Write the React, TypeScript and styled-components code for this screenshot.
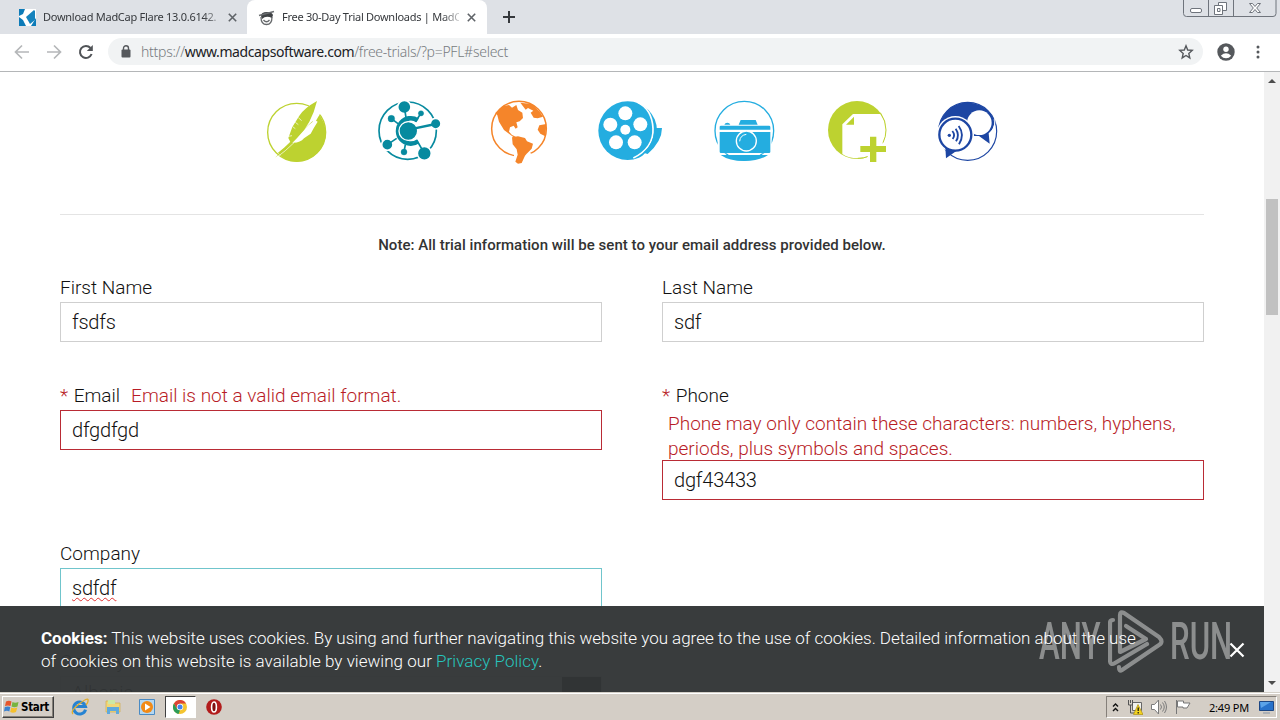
import React from "react";
import styled, { createGlobalStyle } from "styled-components";

const GlobalStyle = createGlobalStyle`
  * {
    box-sizing: border-box;
  }
  body {
    margin: 0;
    overflow: hidden;
    background: #fff;
    font-family: Roboto, sans-serif;
  }
  svg {
    display: block;
    flex: none;
  }
`;

const trialProducts = [
  { name: "Flare", viewBox: "36 18 210 210", Icon: FeatherIcon },
  { name: "Central", viewBox: "372 18 210 210", Icon: NetworkIcon },
  { name: "Lingo", viewBox: "0 0 210 210", Icon: GlobeIcon },
  { name: "Mimic", viewBox: "54 18 210 210", Icon: ReelIcon },
  { name: "Capture", viewBox: "390 18 210 210", Icon: CameraIcon },
  { name: "Contributor", viewBox: "36 18 210 210", Icon: PageIcon },
  { name: "Speech", viewBox: "372 18 210 210", Icon: SpeechIcon },
];

const App: React.FC = () => {
  return (
    <Screen>
      <GlobalStyle />
      <BrowserTabs />
      <AddressBar />
      <Viewport>
        <Page>
          <Products>
            {trialProducts.map(({ name, viewBox, Icon }) => (
              <svg key={name} width="70" height="70" viewBox={viewBox}>
                <Icon />
              </svg>
            ))}
          </Products>
          <Note>
            <NoteText>Note: All trial information will be sent to your email address provided below.</NoteText>
          </Note>
          <Form>
            <Field label="First Name" value="fsdfs" />
            <Field label="Last Name" value="sdf" />
            <Field label="Email" value="dfgdfgd" required error="Email is not a valid email format." />
            <Field
              label="Phone"
              value="dgf43433"
              required
              block
              error="Phone may only contain these characters: numbers, hyphens, periods, plus symbols and spaces."
            />
            <Field label="Company" value="sdfdf" focused />
            <span />
            <FieldBox>
              <Label>Country</Label>
              <Select>
                Albania
                <SelectButton />
              </Select>
            </FieldBox>
          </Form>
          <CookieBanner>
            <CookieText>
              <CookieLine $spacing={-0.02}>
                <b>Cookies:</b> This website uses cookies. By using and further navigating this website you agree to the
                use of cookies. Detailed information about the use
              </CookieLine>
              <CookieLine $spacing={0.03}>
                of cookies on this website is available by viewing our <a>Privacy Policy</a>.
              </CookieLine>
            </CookieText>
          </CookieBanner>
          <Watermark>
            <WatermarkWord>ANY</WatermarkWord>
            <svg width="56" height="64" viewBox="0 0 56 64" fill="none" stroke="#fff" strokeWidth="4.2" strokeLinejoin="round" strokeLinecap="round">
              <path d="M5 10 Q2 10 2 13 V50 Q2 56 7 53 L39 34 M12 21 V5 Q12 1 16 3 L51 27 Q56 32 51 35 L14 60 Q11 62 11 57" />
              <path d="M12 21 V42 L38 29 L18 16" />
            </svg>
            <WatermarkWord>RUN</WatermarkWord>
          </Watermark>
          <CloseBanner>
            <svg width="16" height="16" viewBox="0 0 16 16" stroke="#fff" strokeWidth="2.2">
              <path d="M1.5 1.5 14.5 14.5M14.5 1.5 1.5 14.5" />
            </svg>
          </CloseBanner>
        </Page>
        <Scrollbar>
          <ScrollArrow />
          <ScrollThumb />
          <ScrollArrow $down />
        </Scrollbar>
      </Viewport>
      <Taskbar />
    </Screen>
  );
};

export default App;

function BrowserTabs() {
  return (
    <TabStrip>
      <Tab $width={247}>
        <svg width="17" height="17" viewBox="0 0 17 17">
          <path d="M0 0h17v17H0z" fill="#fff" />
          <path d="M0 0h6L4 5 0 7zM0 8l4 3 3 6H0zM17 9v8h-5z" fill="#0d7bb8" />
          <path d="M7 8 15 1l1 1v9l-5 4z" fill="#1683bd" />
        </svg>
        <TabTitle>Download MadCap Flare 13.0.6142.</TabTitle>
        <CloseIcon />
      </Tab>
      <Tab $width={240} $active>
        <svg width="17" height="17" viewBox="0 0 17 17">
          <path d="M3 7Q3 3 9 3q5 0 6 3l-1 3Q8 6 4 10z" fill="#3f4245" />
          <path d="M1 6.500 16 2.500" stroke="#6a6d70" strokeWidth="1.500" />
          <path d="M3 8Q3 15.500 8.500 15.500T14 8M5.500 11q3 3.500 6 0" fill="none" stroke="#66696c" strokeWidth="1.300" />
        </svg>
        <TabTitle>Free 30-Day Trial Downloads | MadC</TabTitle>
        <CloseIcon />
      </Tab>
      <NewTab>
        <svg width="12" height="12" viewBox="0 0 12 12" stroke="#35383c" strokeWidth="2">
          <path d="M6 0v12M0 6h12" />
        </svg>
      </NewTab>
      <WindowButtons>
        <svg width="94" height="18" viewBox="0 0 94 18" fill="none" stroke="#6f747c">
          <path d="M.5 0v13.500q0 3 3 3h86.500q3 0 3-3V0M25.500 0v16M50.500 0v16" />
          <rect x="7.500" y="8.500" width="11" height="4" rx="1.500" fill="#fff" />
          <path d="M35.500 2.500h8v8h-8z" fill="#fff" />
          <path d="M31.500 5.500h8v9h-8zM34.500 8.500h2.500v3h-2.500z" fill="#fff" />
          <path d="M66.500 3.500h3l2.500 3 2.500-3h3l-3.800 4.500 3.800 4.500h-3l-2.500-3-2.500 3h-3l3.800-4.500z" fill="#fff" />
        </svg>
      </WindowButtons>
    </TabStrip>
  );
}

function CloseIcon() {
  return (
    <svg width="9" height="9" viewBox="0 0 9 9" stroke="#5f6368" strokeWidth="1.600">
      <path d="M.8.8 8.200 8.200M8.200.8.8 8.200" />
    </svg>
  );
}

function AddressBar() {
  return (
    <Toolbar>
      <NavButtons>
        <svg width="16" height="16" viewBox="0 0 16 16" fill="none" stroke="#b5b7b9" strokeWidth="1.700">
          <path d="M15 8H2M8 1.500 1.500 8 8 14.500" />
        </svg>
        <svg width="16" height="16" viewBox="0 0 16 16" fill="none" stroke="#b5b7b9" strokeWidth="1.700">
          <path d="M1 8h13M8 1.500 14.500 8 8 14.500" />
        </svg>
        <svg width="16" height="16" viewBox="0 0 16 16" fill="none" stroke="#505357" strokeWidth="2">
          <path d="M13.600 10A6 6 0 1 1 12.500 4" />
          <path d="M14.800 1v6h-6z" fill="#505357" stroke="none" />
        </svg>
      </NavButtons>
      <Omnibox>
        <svg width="10" height="13" viewBox="0 0 10 13">
          <rect x="0.500" y="4.500" width="9" height="8" rx="1" fill="#55585c" />
          <path d="M2.500 5V3.200a2.500 2.500 0 0 1 5 0V5" fill="none" stroke="#55585c" strokeWidth="1.400" />
        </svg>
        <Url>
          https://<b>www.madcapsoftware.com</b>/free-trials/?p=PFL#select
        </Url>
        <svg width="16" height="16" viewBox="0 0 16 16" fill="none" stroke="#55585c" strokeWidth="1.400">
          <path d="M8 1.800 9.700 6l4.500.4-3.400 3 1 4.500L8 11.500l-3.800 2.400 1-4.500-3.400-3L6.300 6z" />
        </svg>
      </Omnibox>
      <svg width="18" height="18" viewBox="0 0 18 18">
        <circle cx="9" cy="9" r="8.700" fill="#55585c" />
        <circle cx="9" cy="6.300" r="2.700" fill="#fff" />
        <path d="M3.800 12.700Q9 7.800 14.200 12.700 12 15.300 9 15.300T3.800 12.700z" fill="#fff" />
      </svg>
      <svg width="4" height="14" viewBox="0 0 4 14" fill="#55585c">
        <circle cx="2" cy="2" r="1.500" />
        <circle cx="2" cy="7" r="1.500" />
        <circle cx="2" cy="12" r="1.500" />
      </svg>
    </Toolbar>
  );
}

type FieldProps = {
  label: string;
  value: string;
  required?: boolean;
  error?: string;
  block?: boolean;
  focused?: boolean;
};

function Field({ label, value, required, error, block, focused }: FieldProps) {
  return (
    <FieldBox>
      <Label>
        {required && <Star>* </Star>}
        {label}
        {error && !block && <ErrorInline>{error}</ErrorInline>}
      </Label>
      {error && block && <ErrorBlock>{error}</ErrorBlock>}
      <Input $color={error ? "#b92b35" : focused ? "#70c5cc" : "#cfcfcf"}>
        <Value $misspelled={focused}>{value}</Value>
      </Input>
    </FieldBox>
  );
}

function FeatherIcon() {
  return (
    <g>
      <circle cx="140" cy="127" r="87" fill="none" stroke="#bdd230" strokeWidth="4" />
      <path d="M208 74Q247 130 208 183 180 214 140 215 103 214 84 188L104 172z" fill="#bdd230" />
      <path d="M176 34 210 28 211 70 190 106z" fill="#fff" />
      <path d="M124 158q26 2 38-13l20-14 9-16 12-20-8-5-20 16z" fill="#fff" />
      <path d="M201 33Q163 54 148 77L127 111 115 144 121 156 75 203Q111 176 123 163L142 143Q184 104 201 33z" fill="#bdd230" />
      <path d="M128 110l8 6m0-19 9 7m0-21 10 9M116 139l10-2" stroke="#fff" strokeWidth="2" />
      <path d="M78 204Q108 182 132 158" fill="none" stroke="#fff" strokeWidth="2" />
    </g>
  );
}

function NetworkIcon() {
  return (
    <g fill="#078a9f" stroke="#078a9f">
      <circle cx="473" cy="122" r="86" fill="none" strokeWidth="5" />
      <g stroke="#fff" strokeWidth="5">
        <circle cx="463" cy="51" r="20" />
        <circle cx="557" cy="101" r="16" />
        <circle cx="523" cy="190" r="21" />
        <circle cx="412" cy="164" r="17" />
      </g>
      <path d="M500 150l23 40M440 145l-28 19M424 86l24 18M513 70l-17 25M463 51l5 32M462 186l4-22" strokeWidth="5" />
      <path d="M503 91A38 38 0 1 0 504 154" fill="none" strokeWidth="14" />
      <circle cx="475" cy="123" r="28" stroke="#fff" strokeWidth="4" />
      <path d="M480 118 557 102" strokeWidth="7" />
      <circle cx="424" cy="86" r="10" />
      <circle cx="513" cy="70" r="8" />
      <circle cx="462" cy="186" r="9" />
    </g>
  );
}

function GlobeIcon() {
  return (
    <g fill="#f5852a">
      <circle cx="99" cy="98" r="82" fill="none" stroke="#f5852a" strokeWidth="4.500" />
      <path d="M28 51 49 31 69 27 78 35 91 27 96 42 109 50 111 66 101 76 91 79 95 94 89 98 83 89 72 94 69 107 78 117 90 122 82 123 66 111 54 102 39 77 34 58z" />
      <path d="M103 20 137 24 161 47 171 62 155 67 143 65 134 50 142 44 126 36 119 41z" />
      <path d="M181 84 178 121 163 113 155 101 160 88z" />
      <path d="M84 166 92 160 122 166 138 174 118 190 106 206H84z" fill="#fff" />
      <path d="M78 124 96 121 117 126 123 136 141 143 137 158 122 173 117 179 107 201 96 203 88 197 95 176 92 160 80 145z" />
    </g>
  );
}

function ReelIcon() {
  return (
    <g fill="#24ade0">
      <circle cx="143" cy="122" r="88" />
      <path d="M171 36Q216 57 219 115T160 204" fill="none" stroke="#fff" strokeWidth="5" />
      <path d="M231 104Q236 116 224 145T183 202L210 224 265 180V104z" fill="#fff" />
      <path d="M224 114H246Q246 154 203 192L190 188Q221 163 224 114z" />
      <g fill="#fff">
        <circle cx="136" cy="70" r="21" />
        <circle cx="91" cy="104" r="21" />
        <circle cx="181" cy="103" r="21" />
        <circle cx="108" cy="157" r="21" />
        <circle cx="164" cy="157" r="21" />
        <circle cx="136" cy="119" r="15" />
      </g>
    </g>
  );
}

function CameraIcon() {
  return (
    <g fill="#24ade0">
      <circle cx="493" cy="122" r="88" fill="none" stroke="#24ade0" strokeWidth="4" />
      <path d="M422 195H564Q539 213 493 213T422 195z" />
      <path d="M413 107H575V190H413z" fill="#fff" />
      <path d="M419 119V110Q419 107 423 107H567Q571 107 571 111V119zM419 126H571V186Q571 189 567 189H423Q419 189 419 185z" />
      <path d="M476 104 482 90H527L533 104zM433 104Q435 98 442 98T451 104z" />
      <circle cx="499" cy="153" r="30" stroke="#fff" strokeWidth="4" />
      <path d="M479 154Q480 136 499 133" fill="none" stroke="#fff" strokeWidth="3" />
    </g>
  );
}

function PageIcon() {
  return (
    <g fill="#bdd230">
      <circle cx="141" cy="120" r="87" />
      <path d="M97 103 129 72H211Q228 96 228 120 228 157 202 181 180 205 143 205 116 205 97 192z" fill="#fff" />
      <path d="M211 68Q228 92 228 120 228 140 219 158M143 205Q162 205 178 198" fill="none" stroke="#bdd230" strokeWidth="3" />
      <path d="M108 104 132 80V104z" />
      <path d="M145 162H173V134H205V162H233V192H205V218H173V192H145z" fill="#fff" />
      <path d="M151 168H180V140H199V168H228V186H199V216H180V186H151z" />
    </g>
  );
}

function SpeechIcon() {
  return (
    <g fill="#1d46a3">
      <circle cx="473" cy="124" r="87" fill="none" stroke="#1d46a3" strokeWidth="3.500" />
      <path d="M386 124A87 87 0 0 1 550 84Q560 112 536 130L539 161 507 138H492L470 100z" />
      <path d="M550 70Q563 104 541 129" fill="none" stroke="#fff" strokeWidth="3" />
      <circle cx="508" cy="98" r="37" fill="#fff" />
      <circle cx="436" cy="134" r="56" fill="#fff" />
      <circle cx="436" cy="134" r="48" fill="#fff" stroke="#1d46a3" strokeWidth="7" />
      <path d="M406 171 408 205 439 183Q418 182 406 171z" />
      <circle cx="418" cy="136" r="5" />
      <path d="M427 123Q437 135 428 147M437 116Q450 135 438 154M446 108Q465 134 447 163" fill="none" stroke="#1d46a3" strokeWidth="5.500" />
    </g>
  );
}

function Taskbar() {
  return (
    <Bar>
      <StartButton>
        <svg width="16" height="16" viewBox="0 0 16 16">
          <path d="M2 2.500Q5 1 7.500 2.500L6.500 7Q4 5.800 1 7z" fill="#e7562c" />
          <path d="M8.500 3Q11 4.500 14.500 3L13.500 7.500Q10.500 9 7.500 7.500z" fill="#77b43f" />
          <path d="M.8 8Q4 6.800 6.300 8L5.300 12.500Q3 11 0 12.500z" fill="#3d82cf" />
          <path d="M7.300 8.500Q10 10 13.300 8.500L12 13Q9 14.500 6.200 13z" fill="#f5c02d" />
        </svg>
        Start
      </StartButton>
      <Launchers>
        <Launcher>
          <svg width="18" height="18" viewBox="0 0 18 18" fill="none">
            <path d="M14.500 11.500A6 6 0 1 1 14.500 8.500H5" stroke="#2683d2" strokeWidth="3" />
            <path d="M2 16Q-1 13 8 6T17 2Q17.500 4 15 7" stroke="#e2ae2c" strokeWidth="1.300" />
          </svg>
        </Launcher>
        <Launcher>
          <svg width="16" height="16" viewBox="0 0 16 16">
            <path d="M1 2h5l1 2h8v9H1z" fill="#f1d778" stroke="#d1ae4c" strokeWidth=".7" />
            <path d="M3 1h7v4H3z" fill="#cce8a5" />
            <path d="M2 8h12v7h-3v-3H5v3H2z" fill="#5fa9dc" />
          </svg>
        </Launcher>
        <Launcher>
          <svg width="16" height="16" viewBox="0 0 16 16">
            <path d="M.5.5h15v15H.5z" fill="#b4d7f1" stroke="#4a8bc4" />
            <circle cx="8" cy="8" r="6" fill="#f28a16" />
            <path d="M6 4.500 11.500 8 6 11.500z" fill="#fff" />
          </svg>
        </Launcher>
        <Launcher $pressed>
          <svg width="14" height="14" viewBox="0 0 14 14">
            <circle cx="7" cy="7" r="7" fill="#f4c430" />
            <path d="M.9 3.500A7 7 0 0 1 13.100 3.500H7L4 8.700z" fill="#dc4437" />
            <path d="M.9 3.500 4 8.700 7 10.500 5.500 13.900A7 7 0 0 1 .9 3.500z" fill="#2d9b58" />
            <circle cx="7" cy="7" r="3.200" fill="#fff" />
            <circle cx="7" cy="7" r="2.500" fill="#4384ed" />
          </svg>
        </Launcher>
        <Launcher>
          <svg width="16" height="16" viewBox="0 0 16 16">
            <circle cx="8" cy="8" r="7.800" fill="#b21c1c" />
            <ellipse cx="8" cy="8" rx="2.400" ry="5" fill="#801010" stroke="#fff" strokeWidth="1.600" />
          </svg>
        </Launcher>
      </Launchers>
      <Tray>
        <svg width="7" height="9" viewBox="0 0 7 9" fill="none" stroke="#111" strokeWidth="1.400">
          <path d="M1 3.500 3.500 1 6 3.500M1 8 3.500 5.500 6 8" />
        </svg>
        <svg width="16" height="16" viewBox="0 0 16 16">
          <path d="M5.500 3.500h9v8h-9z" fill="#f1f1ee" stroke="#666" />
          <path d="M1.500 1v5h4V1M3.500 1v3M3.500 6v8h5" fill="none" stroke="#555" />
          <path d="M11 5.500 16 15.500H6.500z" fill="#f3d320" stroke="#af9013" strokeWidth=".7" />
          <path d="M11.200 8.500v3.500M11.200 13v1.500" stroke="#111" strokeWidth="1.200" />
        </svg>
        <svg width="16" height="16" viewBox="0 0 16 16" fill="none" stroke="#7b7b7b">
          <path d="M.5 5.500h3l4-4.500v14l-4-4.500h-3z" fill="#fff" />
          <path d="M9.500 5.500q2 2.500 0 5M11.500 3.500q3.500 4.500 0 9M13.500 2q4 6 0 12" />
        </svg>
        <svg width="16" height="16" viewBox="0 0 16 16" fill="#fff" stroke="#777">
          <path d="M1.500 1v14M2.500 2h6v2h6.500l-3 5h-4V8h-5.500z" />
        </svg>
        <Clock>2:49 PM</Clock>
        <svg width="15" height="14" viewBox="0 0 15 14">
          <path d="M.5 1.500h14v9H.5z" fill="#2872ca" stroke="#1d4784" />
          <path d="M1 2h11L2 8z" fill="#5ba3e8" />
          <path d="M4 13h7" stroke="#8693a4" />
        </svg>
      </Tray>
    </Bar>
  );
}

const Screen = styled.div`
  width: 1280px;
  height: 720px;
  display: flex;
  flex-direction: column;
  overflow: hidden;
`;

const TabStrip = styled.div`
  height: 34px;
  display: flex;
  background: #dee1e6;
`;

const Tab = styled.div<{ $width: number; $active?: boolean }>`
  width: ${(p) => p.$width}px;
  display: flex;
  align-items: center;
  padding-left: ${(p) => (p.$active ? 11 : 19)}px;
  border-radius: 8px 8px 0 0;
  background: ${(p) => (p.$active ? "#fff" : "transparent")};
`;

const TabTitle = styled.div`
  flex: none;
  width: 177px;
  margin: 0 8px 0 7px;
  overflow: hidden;
  white-space: nowrap;
  font: 11px/16px "Noto Sans", sans-serif;
  letter-spacing: -0.27px;
  color: #35383c;
  mask-image: linear-gradient(to right, #000 160px, rgba(0, 0, 0, 0.25) 177px);
`;

const NewTab = styled.div`
  display: flex;
  align-items: center;
  margin-left: 16px;
`;

const WindowButtons = styled.div`
  margin: 0 3px 0 auto;
`;

const Toolbar = styled.div`
  height: 38px;
  display: flex;
  align-items: center;
  padding: 0 0 2px 14px;
  border-bottom: 1px solid #b4b6b8;
  background: #fff;

  > svg:nth-child(3) {
    margin: 0 21px 0 14px;
  }
`;

const NavButtons = styled.div`
  display: flex;
  gap: 16px;
  margin-right: 14px;
`;

const Omnibox = styled.div`
  flex: none;
  width: 1095px;
  height: 27px;
  display: flex;
  align-items: center;
  padding: 0 9px 0 13px;
  border-radius: 14px;
  background: #f1f3f4;
`;

const Url = styled.div`
  flex: 1;
  margin-left: 10px;
  white-space: nowrap;
  font: 300 14px/20px "Noto Sans", sans-serif;
  letter-spacing: -0.27px;
  color: #777b80;

  b {
    font-weight: 400;
    letter-spacing: -0.4px;
    color: #202124;
  }
`;

const Viewport = styled.div`
  height: 620px;
  display: flex;
`;

const Page = styled.main`
  position: relative;
  width: 1264px;
  padding: 0 60px;
  overflow: hidden;
  background: #fff;
`;

const Products = styled.div`
  height: 143px;
  display: flex;
  gap: 42px;
  padding: 24px 0 0 202px;
  border-bottom: 1px solid #e4e4e4;
`;

const Note = styled.div`
  height: 60px;
  display: flex;
  align-items: center;
  justify-content: center;
`;

const NoteText = styled.div`
  font-size: 15px;
  font-weight: 500;
  letter-spacing: 0.03px;
  color: #333;
  white-space: nowrap;
`;

const Form = styled.div`
  display: grid;
  grid-template-columns: 542px 542px;
  column-gap: 60px;
  row-gap: 41px;
`;

const FieldBox = styled.div`
  font-size: 19px;
  font-weight: 300;
  color: #111;
`;

const Label = styled.div`
  height: 27px;
  line-height: 26px;
  white-space: nowrap;
`;

const Star = styled.span`
  margin-right: 1px;
  color: #b81c26;
`;

const ErrorInline = styled.span`
  margin-left: 11px;
  color: #b81c26;
`;

const ErrorBlock = styled.div`
  height: 50px;
  padding: 1px 0 0 6px;
  line-height: 25px;
  color: #b81c26;
`;

const Input = styled.div<{ $color: string }>`
  height: 40px;
  padding: 0 11px;
  border: 1px solid ${(p) => p.$color};
  font-size: 20px;
  letter-spacing: -0.2px;
  line-height: 38px;
  background: #fff;
`;

const Value = styled.span<{ $misspelled?: boolean }>`
  text-decoration: ${(p) => (p.$misspelled ? "underline wavy #e03030 1px" : "none")};
  text-underline-offset: 2px;
  text-decoration-skip-ink: none;
`;

const Select = styled.div`
  height: 40px;
  display: flex;
  justify-content: space-between;
  padding-left: 11px;
  border: 1px solid #cfcfcf;
  line-height: 32px;
`;

const SelectButton = styled.div`
  width: 39px;
  background: #333;
`;

const CookieBanner = styled.div`
  position: absolute;
  left: 0;
  right: 0;
  bottom: 0;
  height: 86px;
  padding: 21px 41px;
  background: rgba(50, 53, 54, 0.965);
`;

const CookieText = styled.div`
  font-size: 17px;
  font-weight: 300;
  line-height: 23px;
  color: #fff;

  b {
    font-weight: 700;
  }
  a {
    color: #27c5bd;
  }
`;

const CookieLine = styled.div<{ $spacing: number }>`
  white-space: nowrap;
  letter-spacing: ${(p) => p.$spacing}px;
`;

// Translucent logo stamped over the lower right corner of the page
const Watermark = styled.div`
  position: absolute;
  left: 1039px;
  top: 538px;
  width: 194px;
  display: flex;
  align-items: center;
  justify-content: space-between;
  opacity: 0.42;
`;

const WatermarkWord = styled.div`
  width: 63px;
  font-size: 52px;
  font-weight: 500;
  line-height: 62px;
  color: #fff;
  transform: scaleX(0.6);
  transform-origin: left;
`;

const CloseBanner = styled.div`
  position: absolute;
  left: 1229px;
  top: 570px;
`;

const Scrollbar = styled.div`
  width: 16px;
  display: flex;
  flex-direction: column;
  align-items: center;
  background: #f1f1f1;
`;

const ScrollArrow = styled.div<{ $down?: boolean }>`
  width: 0;
  height: 4px;
  margin: ${(p) => (p.$down ? "auto 0 7px" : "7px 0 0")};
  border: 4px solid transparent;
  border-top: ${(p) => (p.$down ? "4px solid #4d4d4d" : "0")};
  border-bottom: ${(p) => (p.$down ? "0" : "4px solid #4d4d4d")};
`;

const ScrollThumb = styled.div`
  width: 12px;
  height: 116px;
  margin-top: 116px;
  background: #c1c1c1;
`;

const Bar = styled.div`
  height: 28px;
  display: flex;
  align-items: center;
  padding: 1px 3px 0 2px;
  border-top: 1px solid #d4d0c8;
  background: #d4cec6;
  box-shadow: inset 0 1px #fff;
`;

const StartButton = styled.div`
  width: 52px;
  height: 22px;
  display: flex;
  align-items: center;
  gap: 1px;
  padding-left: 1px;
  border: 1px solid;
  border-color: #fff #404040 #404040 #fff;
  box-shadow: inset -1px -1px #858078;
  font: bold 11.5px "DejaVu Sans Condensed", "DejaVu Sans", sans-serif;
  letter-spacing: -0.3px;
  color: #000;
`;

const Launchers = styled.div`
  display: flex;
  gap: 2.5px;
  margin-left: 10px;
`;

const Launcher = styled.div<{ $pressed?: boolean }>`
  width: 31px;
  height: 22px;
  display: flex;
  align-items: center;
  justify-content: center;
  border: 1px solid;
  border-color: ${(p) => (p.$pressed ? "#404040 #fff #fff #404040" : "transparent")};
  background: ${(p) => (p.$pressed ? "#fff" : "transparent")};
`;

const Tray = styled.div`
  width: 171px;
  height: 22px;
  display: flex;
  align-items: center;
  gap: 8px;
  margin-left: auto;
  padding-left: 5px;
  border: 1px solid;
  border-color: #85807a #fff #fff #85807a;
`;

const Clock = styled.div`
  width: 42px;
  margin-left: 10px;
  white-space: nowrap;
  font: 11px "Noto Sans", sans-serif;
  letter-spacing: -0.2px;
  color: #000;
`;
